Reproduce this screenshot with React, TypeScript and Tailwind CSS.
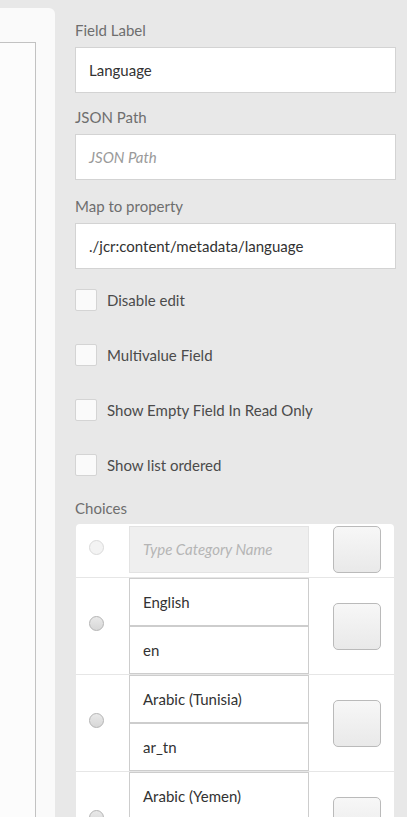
const font = { fontFamily: 'Lato, "Liberation Sans", sans-serif' };

const checks = ['Disable edit', 'Multivalue Field', 'Show Empty Field In Read Only', 'Show list ordered'];

const choices = [
  { title: 'English', value: 'en' },
  { title: 'Arabic (Tunisia)', value: 'ar_tn' },
  { title: 'Arabic (Yemen)', value: '' },
];

function Label({ children }: { children: React.ReactNode }) {
  return <div className="h-5 leading-5 text-[15px] text-[#6e6e6e]">{children}</div>;
}

function TextBox({ value, placeholder }: { value?: string; placeholder?: string }) {
  return (
    <div className="mt-[7px] h-[46px] bg-white border border-[#d3d3d3] flex items-center px-[13px]">
      {value ? (
        <span className="text-[15px] text-[#323232]">{value}</span>
      ) : (
        <span className="text-[15px] italic text-[#9a9a9a]">{placeholder}</span>
      )}
    </div>
  );
}

function Radio({ disabled }: { disabled?: boolean }) {
  return (
    <span
      className={`block w-[15px] h-[15px] rounded-full border mb-[5px] ${
        disabled
          ? 'border-[#dadada] bg-[#f3f3f3]'
          : 'border-[#b4b4b4] bg-gradient-to-b from-[#e9e9e9] to-[#d7d7d7]'
      }`}
    />
  );
}

function SquareButton() {
  return (
    <div className="w-[48px] h-[47px] rounded-[5px] border border-[#bababa] bg-gradient-to-b from-[#f7f7f7] to-[#e9e9e9]" />
  );
}

export default function App() {
  return (
    <div className="h-[817px] w-full overflow-hidden bg-[#e8e8e8] flex" style={font}>
      {/* left panel */}
      <div className="w-[55px] shrink-0 pt-2">
        <div className="h-full bg-[#fafafa] rounded-tr-[6px] pt-[34px]">
          <div className="w-[36px] h-full border-t border-r border-[#c2c2c2] bg-[#fcfcfc]" />
        </div>
      </div>

      {/* properties */}
      <div className="ml-[20px] w-[321px] pt-5">
        <Label>Field Label</Label>
        <TextBox value="Language" />

        <div className="mt-[14px]">
          <Label>JSON Path</Label>
          <TextBox placeholder="JSON Path" />
        </div>

        <div className="mt-[16px]">
          <Label>Map to property</Label>
          <TextBox value="./jcr:content/metadata/language" />
        </div>

        <div className="mt-[20px] flex flex-col gap-[33px]">
          {checks.map(c => (
            <div key={c} className="flex items-center gap-[10px] h-[22px]">
              <span className="w-[22px] h-[22px] rounded-[2px] border border-[#d4d4d4] bg-[#fafafa]" />
              <span className="text-[15px] text-[#4b4b4b]">{c}</span>
            </div>
          ))}
        </div>

        <div className="mt-[22px]">
          <Label>Choices</Label>
        </div>

        <div className="mt-[6px] ml-px w-[318px] bg-white rounded-t-[4px]">
          {/* new choice row */}
          <div className="flex items-center pt-[2px] pb-[4px] border-b border-[#e6e6e6]">
            <div className="w-[53px] pl-[13px] flex items-center">
              <Radio disabled />
            </div>
            <div className="w-[180px] h-[47px] bg-[#efefef] border border-[#e3e3e3] flex items-center px-[13px]">
              <span className="text-[15px] italic text-[#b5b5b5]">Type Category Name</span>
            </div>
            <div className="ml-[24px]">
              <SquareButton />
            </div>
          </div>

          {choices.map(ch => (
            <div key={ch.title} className="flex items-center border-b border-[#e6e6e6]">
              <div className="w-[53px] pl-[13px] flex items-center">
                <Radio />
              </div>
              <div className="w-[180px] flex flex-col">
                <div className="h-[48px] border border-[#cdcdcd] flex items-center px-[13px]">
                  <span className="text-[15px] text-[#323232]">{ch.title}</span>
                </div>
                <div className="h-[48px] border border-[#cdcdcd] flex items-center px-[13px]">
                  <span className="text-[15px] text-[#323232]">{ch.value}</span>
                </div>
              </div>
              <div className="ml-[24px]">
                <SquareButton />
              </div>
            </div>
          ))}
        </div>
      </div>
    </div>
  );
}
